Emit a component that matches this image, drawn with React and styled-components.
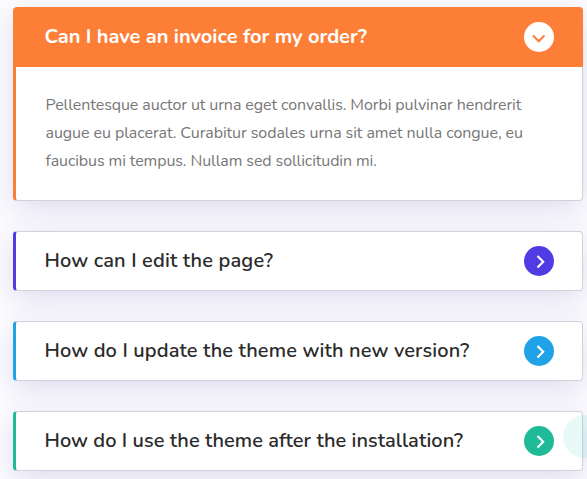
import React, { useState } from "react";
import styled, { createGlobalStyle } from "styled-components";

const GlobalStyle = createGlobalStyle`
  *, *::before, *::after { box-sizing: border-box; }
  body {
    margin: 0;
    background: #fdfcff;
    font-family: Nunito, Lato, "Open Sans", sans-serif;
    overflow: hidden;
  }
`;

const Page = styled.main`
  position: relative;
  height: 479px;
  padding: 7px 4px 0 13px;
  overflow: hidden;
`;

const List = styled.div`
  display: flex;
  flex-direction: column;
  gap: 30px;
`;

const Card = styled.section`
  border: 1px solid #d2d1d8;
  border-left: 3px solid ${(p) => p.$accent};
  border-radius: 4px;
  background: #fff;
  box-shadow: 0 8px 30px rgba(65, 50, 150, 0.16);
  ${(p) => p.$open && `border-top: 0; height: 194px;`}
`;

const Header = styled.button`
  display: flex;
  align-items: center;
  justify-content: space-between;
  width: ${(p) => (p.$open ? "calc(100% + 1px)" : "100%")};
  height: ${(p) => (p.$open ? 60 : 58)}px;
  padding: 0 ${(p) => (p.$open ? 29 : 28)}px 0 28.5px;
  border: 0;
  border-radius: ${(p) => (p.$open ? "0 4px 0 0" : "0")};
  background: ${(p) => (p.$open ? p.$accent : "transparent")};
  color: ${(p) => (p.$open ? "#fff" : "#2b2b2b")};
  font: ${(p) => (p.$open ? 700 : 600)} 20px/28px Nunito, Lato, "Open Sans", sans-serif;
  text-align: left;
  cursor: pointer;
`;

const Title = styled.span`
  letter-spacing: ${(p) => p.$tracking}px;
  white-space: nowrap;
`;

const Toggle = styled.span`
  display: grid;
  place-items: center;
  flex: none;
  width: 30px;
  height: 30px;
  border-radius: 50%;
  background: ${(p) => (p.$open ? "#fff" : p.$accent)};
  color: ${(p) => (p.$open ? p.$accent : "#fff")};
`;

const Chevron = styled.svg`
  display: block;
  width: 30px;
  height: 30px;
  fill: none;
  stroke: currentColor;
  stroke-width: 2.1;
`;

const Answer = styled.p`
  margin: 0;
  padding: 24px 0 0 29.5px;
  color: #777;
  font-size: 16px;
  font-weight: 400;
  line-height: 28px;
`;

const Line = styled.span`
  display: block;
  letter-spacing: ${(p) => p.$tracking}px;
  white-space: nowrap;
`;

const Bubble = styled.div`
  position: absolute;
  left: 563px;
  top: 415px;
  width: 43px;
  height: 43px;
  border-radius: 50%;
  background: rgba(29, 195, 175, 0.1);
  pointer-events: none;
`;

const items = [
  {
    title: "Can I have an invoice for my order?",
    accent: "#fd7e36",
    tracking: -0.015,
    answer: [
      ["Pellentesque auctor ut urna eget convallis. Morbi pulvinar hendrerit", -0.085],
      ["augue eu placerat. Curabitur sodales urna sit amet nulla congue, eu", -0.07],
      ["faucibus mi tempus. Nullam sed sollicitudin mi.", -0.1],
    ],
  },
  { title: "How can I edit the page?", accent: "#503be5", tracking: 0.15 },
  { title: "How do I update the theme with new version?", accent: "#20a2e8", tracking: 0.12 },
  { title: "How do I use the theme after the installation?", accent: "#1fbb99", tracking: 0.04 },
];

export default function App() {
  const [active, setActive] = useState(0);
  return (
    <Page>
      <GlobalStyle />
      <List>
        {items.map((item, i) => {
          const open = active === i && Boolean(item.answer);
          return (
            <Card key={item.title} $accent={item.accent} $open={open}>
              <Header $accent={item.accent} $open={open} aria-expanded={open} onClick={() => setActive(i)}>
                <Title $tracking={item.tracking}>{item.title}</Title>
                <Toggle $accent={item.accent} $open={open}>
                  <Chevron viewBox="0 0 30 30">
                    <path d={open ? "M9 13.5 L14.7 19.2 L20.4 13.5" : "M13.5 10 L19.2 15.7 L13.5 21.4"} />
                  </Chevron>
                </Toggle>
              </Header>
              {open && (
                <Answer>
                  {item.answer.map(([text, tracking]) => (
                    <Line key={text} $tracking={tracking}>{text}</Line>
                  ))}
                </Answer>
              )}
            </Card>
          );
        })}
      </List>
      <Bubble />
    </Page>
  );
}
